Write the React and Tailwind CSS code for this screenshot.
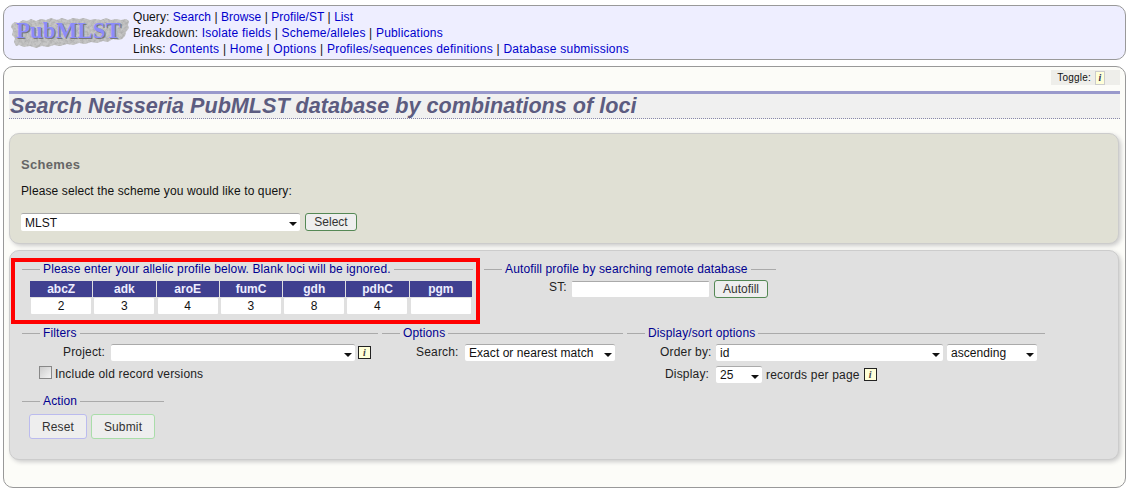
import React from 'react';

const loci = [
  ['abcZ', '2'],
  ['adk', '3'],
  ['aroE', '4'],
  ['fumC', '3'],
  ['gdh', '8'],
  ['pdhC', '4'],
  ['pgm', ''],
];

const Logo = () => (
  <div className="relative w-[120px] h-[32px] shrink-0">
    <svg width="120" height="32" viewBox="0 0 120 32" className="block">
      <defs>
        <filter id="rock" x="0" y="0" width="100%" height="100%">
          <feTurbulence type="fractalNoise" baseFrequency="0.35" numOctaves="4" seed="7" />
          <feColorMatrix values="0 0 0 0 0.42  0 0 0 0 0.42  0 0 0 0 0.42  2.2 0 0 0 -0.75" />
          <feComposite in2="SourceGraphic" operator="in" result="grain" />
          <feMerge>
            <feMergeNode in="SourceGraphic" />
            <feMergeNode in="grain" />
          </feMerge>
        </filter>
      </defs>
      <path
        filter="url(#rock)"
        fill="#c6c6c6"
        d="M2 7 L5 5 L8 6 L13 3 L17 4 L21 2 L26 4 L31 2 L36 3 L41 1 L47 3 L52 1 L58 3 L63 1 L69 2 L74 1 L80 3 L85 2 L91 3 L96 1 L101 3 L106 2 L111 3 L116 2 L119 4 L118 8 L119 11 L116 15 L115 19 L112 22 L108 23 L103 22 L98 25 L93 24 L87 26 L81 25 L75 27 L69 26 L63 28 L57 27 L50 29 L44 28 L38 30 L32 29 L26 31 L20 29 L14 30 L9 28 L6 29 L4 25 L5 21 L2 18 L3 13 L1 10 Z"
      />
    </svg>
    <span className="absolute left-[6px] top-[0px] text-[23px] leading-[28px] font-bold text-[#8c8cfa] [font-family:'Liberation_Serif',serif] [text-shadow:1px_1px_0_#777]">
      PubMLST
    </span>
  </div>
);

const Link = ({ children }) => <a className="text-[#0000cc]">{children}</a>;

const Sep = () => <span> | </span>;

const Info = ({ className = '' }) => (
  <span className={`inline-flex items-center justify-center w-[13px] h-[13px] border border-[#222] bg-[#ffffd8] text-[10px] leading-none italic font-bold text-[#444] [font-family:'Liberation_Serif',serif] ${className}`}>
    i
  </span>
);

const Dropdown = ({ value, className }) => (
  <div className={`relative h-[17px] bg-white border-t border-t-[#aaa] rounded-[2px] ${className}`}>
    <select
      defaultValue={value}
      className="block w-full h-full appearance-none bg-transparent pl-[4px] text-[12px] leading-[16px] tracking-[0.05px] text-[#111] outline-none"
    >
      <option value={value}>{value}</option>
    </select>
    <svg width="8" height="4" viewBox="0 0 8 4" className="absolute right-[3px] top-[8px]">
      <path d="M0 0 H8 L4 4 Z" fill="#111" />
    </svg>
  </div>
);

const Group = ({ title, className, children }) => (
  <fieldset className={`border-t border-[#aaa] ${className}`}>
    <legend className="ml-[18px] px-[3px] text-[12px] leading-[14px] tracking-[0.13px] text-[#000090]">{title}</legend>
    {children}
  </fieldset>
);

const Label = ({ children, className = '' }) => (
  <span className={`text-[12px] leading-[14px] tracking-[0.18px] text-[#222] ${className}`}>{children}</span>
);

const App = () => (
  <div className="relative w-[1129px] h-[502px] bg-white pt-[5px] px-[3px] text-[12px] text-[#111] [font-family:'Liberation_Sans',Arial,sans-serif]">
    <header className="flex h-[55px] items-center pl-[6px] gap-[3px] bg-[#eeeeff] border border-[#999] rounded-[10px]">
      <Logo />
      <div className="text-[12px] leading-[16px]">
        <div className="tracking-[0.05px]">Query: <Link>Search</Link><Sep /><Link>Browse</Link><Sep /><Link>Profile/ST</Link><Sep /><Link>List</Link></div>
        <div className="tracking-[0.19px]">Breakdown: <Link>Isolate fields</Link><Sep /><Link>Scheme/alleles</Link><Sep /><Link>Publications</Link></div>
        <div className="tracking-[0.24px]">Links: <Link>Contents</Link><Sep /><Link>Home</Link><Sep /><Link>Options</Link><Sep /><Link>Profiles/sequences definitions</Link><Sep /><Link>Database submissions</Link></div>
      </div>
    </header>

    <main className="mt-[6px] h-[422px] bg-[#fcfcf8] border border-[#999] rounded-[10px] px-[5px] pt-[3px]">
      <div className="flex justify-end">
        <div className="flex items-center h-[15px] pl-[6px] pr-[15px] gap-[4px] bg-[#eeeeea] text-[10px] tracking-[0.2px]">
          Toggle:
          <span className="inline-flex items-center justify-center w-[10px] h-[14px] border border-[#ccc] bg-[#ffffd8] text-[10px] italic font-bold text-[#335] [font-family:'Liberation_Serif',serif]">i</span>
        </div>
      </div>
      <h1 className="mt-[6px] h-[28px] bg-[#f0f0f0] border-t-[3px] border-t-[#9999cc] border-b border-b-[#8888aa] [border-bottom-style:dotted] text-[21.6px] leading-[23px] font-bold italic text-[#5c5c80] pl-[1px]">
        Search Neisseria PubMLST database by combinations of loci
      </h1>

      <section className="mt-[14px] mr-[1px] h-[111px] bg-[#e0e0d4] border border-[#ccc] rounded-[10px] shadow-[2px_2px_4px_#ccc] pl-[11px] pt-[23px]">
        <h2 className="text-[13px] leading-[15px] font-bold text-[#666] tracking-[0.3px]">Schemes</h2>
        <p className="mt-[12px] text-[12px] leading-[14px] tracking-[0.11px]">Please select the scheme you would like to query:</p>
        <div className="mt-[15px] flex items-center gap-[5px]">
          <Dropdown value="MLST" className="w-[279px] h-[18px]" />
          <button className="h-[18px] w-[52px] bg-[#eeeeee] border border-[#558855] rounded-[3px] text-[12px] leading-[14px] text-[#333]">Select</button>
        </div>
      </section>

      <section className="mt-[6px] mr-[1px] h-[210px] bg-[#e0e0e0] border border-[#ccc] rounded-[10px] shadow-[2px_2px_4px_#ccc] pl-[12px] pt-[11px]">
        <div className="flex gap-[11px]">
          <Group title="Please enter your allelic profile below. Blank loci will be ignored." className="w-[451px] pb-[9px]">
            <div className="mt-[5px] ml-[8px] grid grid-cols-7 w-[442px] gap-x-[1px]">
              {loci.map(([name]) => (
                <div key={name} className="h-[16px] bg-[#404090] text-center text-[12px] leading-[16px] font-bold text-[#eeeeff]">{name}</div>
              ))}
              {loci.map(([name, value]) => (
                <input
                  key={name}
                  defaultValue={value}
                  className="mt-[1px] mx-[1px] w-[60px] h-[16px] bg-white rounded-[1px] text-center text-[12px] leading-[16px] text-[#111] outline-none"
                />
              ))}
            </div>
          </Group>
          <Group title="Autofill profile by searching remote database" className="w-[292px]">
            <div className="mt-[4px] flex items-center">
              <Label className="ml-[65px] w-[23px] pb-[4px]">ST:</Label>
              <input className="w-[137px] h-[16px] bg-white border-t border-t-[#aaa] rounded-[1px] outline-none" />
              <button className="ml-[5px] h-[18px] w-[54px] bg-[#eeeeee] border border-[#558855] rounded-[3px] text-[12px] leading-[14px] text-[#333]">Autofill</button>
            </div>
          </Group>
        </div>

        <div className="mt-[3px] flex gap-[4px]">
          <Group title="Filters" className="w-[356px] h-[60px]">
            <div className="mt-[4px] flex items-center">
              <Label className="ml-[41px] w-[48px] pb-[2px]">Project:</Label>
              <Dropdown value="" className="w-[244px]" />
              <Info className="ml-[3px]" />
            </div>
            <label className="mt-[5px] ml-[17px] flex items-center gap-[3px]">
              <span className="block w-[13px] h-[13px] border border-[#888] bg-[linear-gradient(135deg,#ccc,#f4f4f4)] -mt-[2px]" />
              <Label className="mt-[1px]">Include old record versions</Label>
            </label>
          </Group>
          <Group title="Options" className="w-[241px]">
            <div className="mt-[4px] flex items-center">
              <Label className="ml-[34px] w-[49px] pb-[2px]">Search:</Label>
              <Dropdown value="Exact or nearest match" className="w-[150px]" />
            </div>
          </Group>
          <Group title="Display/sort options" className="w-[418px]">
            <div className="mt-[4px] flex items-center">
              <Label className="ml-[33px] w-[56px] pb-[2px]">Order by:</Label>
              <Dropdown value="id" className="w-[227px]" />
              <Dropdown value="ascending" className="ml-[4px] w-[90px]" />
            </div>
            <div className="mt-[5px] flex items-center">
              <Label className="ml-[38px] w-[51px] pb-[2px]">Display:</Label>
              <Dropdown value="25" className="w-[46px]" />
              <Label className="ml-[4px]">records per page</Label>
              <Info className="ml-[4px]" />
            </div>
          </Group>
        </div>

        <Group title="Action" className="mt-[8px] w-[142px]">
          <div className="mt-[6px] ml-[7px] flex gap-[4px]">
            <button className="w-[58px] h-[25px] bg-[#eeeeee] border border-[#bbbbee] rounded-[3px] text-[12px] tracking-[0.15px] text-[#333]">Reset</button>
            <button className="w-[64px] h-[25px] bg-[#eeeeee] border border-[#aaddaa] rounded-[3px] text-[12px] tracking-[0.15px] text-[#333]">Submit</button>
          </div>
        </Group>
      </section>
    </main>

    <div className="absolute left-[11px] top-[258px] w-[469px] h-[66px] border-[4px] border-[#ff0000] pointer-events-none" />
  </div>
);

export default App;
